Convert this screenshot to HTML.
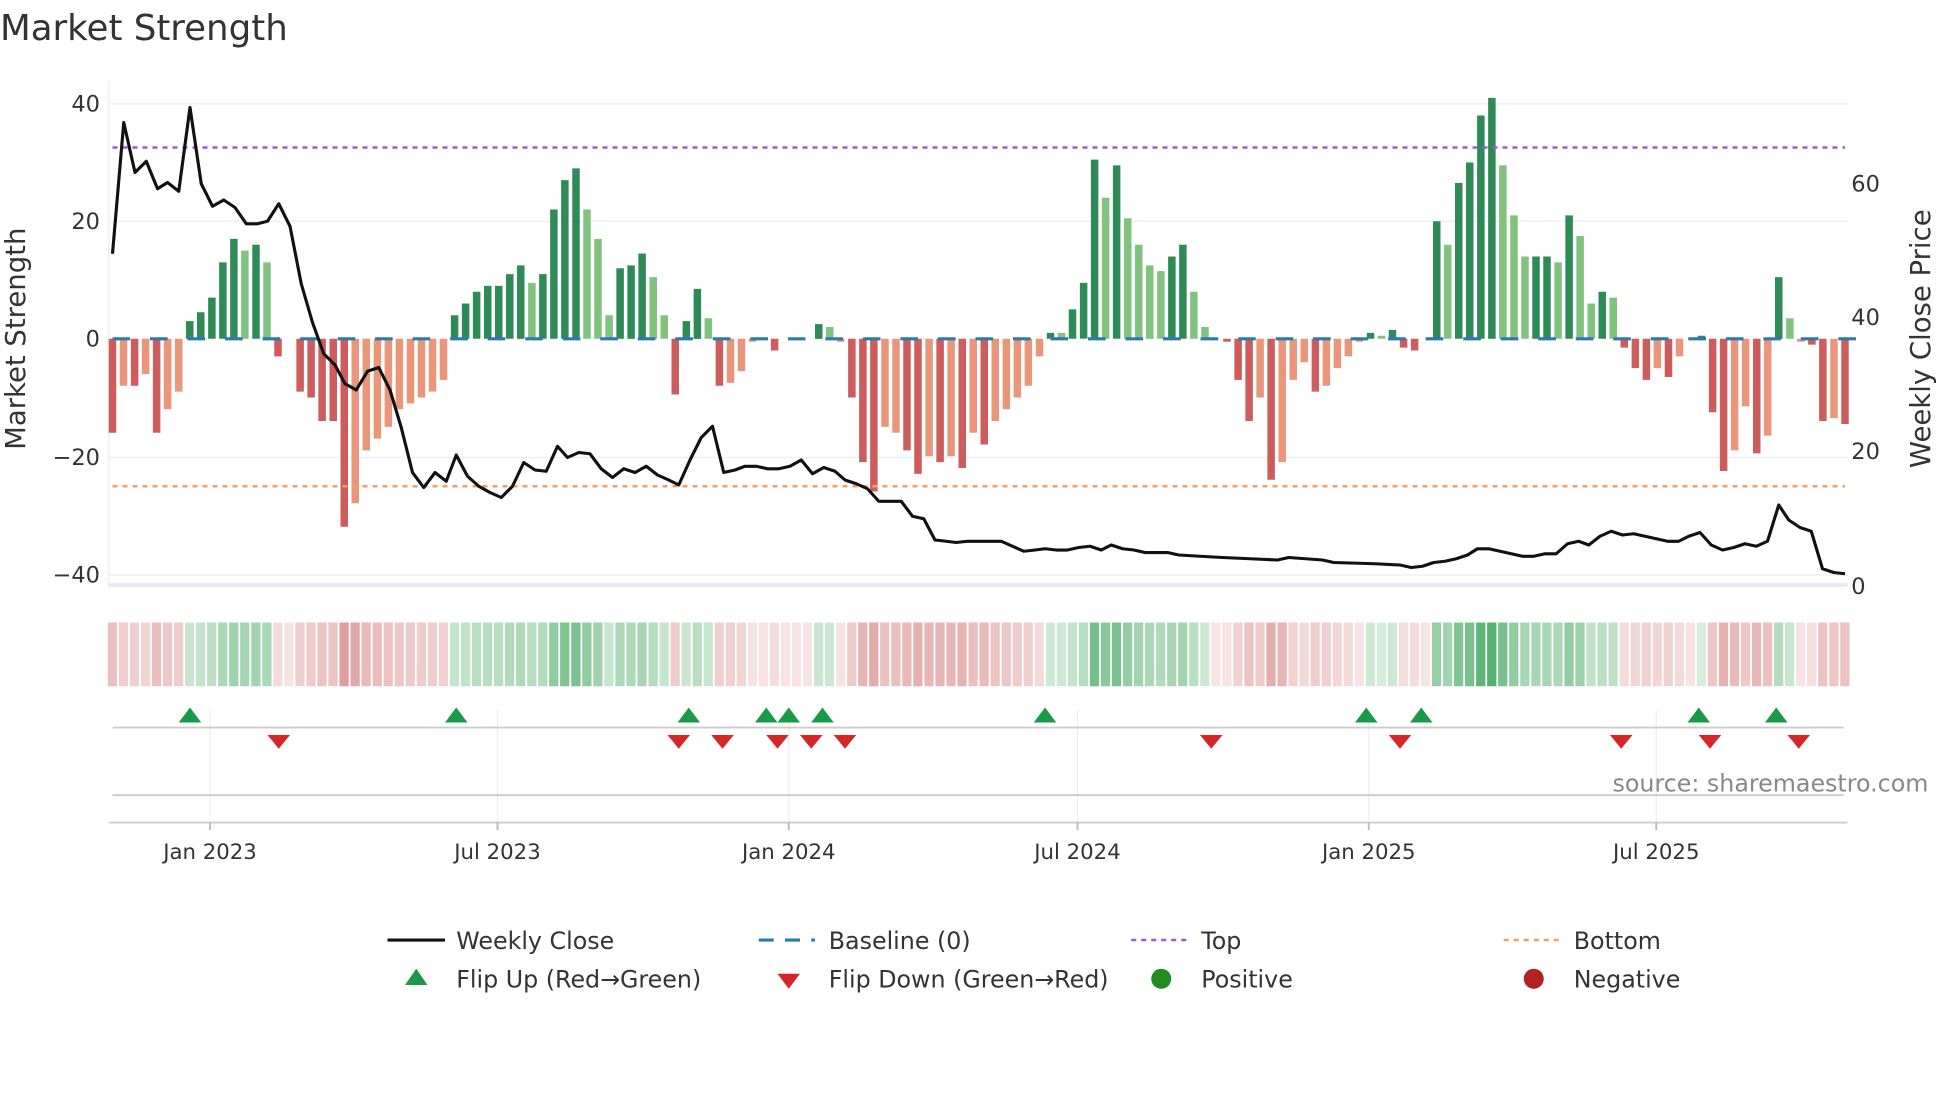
<!DOCTYPE html>
<html><head><meta charset="utf-8"><style>
html,body{margin:0;padding:0;background:#fff;width:1960px;height:1102px;overflow:hidden}
svg{display:block;font-family:"DejaVu Sans","Liberation Sans",sans-serif}
</style></head><body>
<svg id="s" width="1960" height="1102" viewBox="0 0 1568 881.6" xmlns="http://www.w3.org/2000/svg">
<rect width="1568" height="882" fill="#fff"/>
<text x="0" y="32" font-size="28.5" fill="#333">Market Strength</text>
<g stroke="#eceef3" stroke-width="1">
<line x1="87" x2="1478" y1="83" y2="83"/><line x1="87" x2="1478" y1="177" y2="177"/>
<line x1="87" x2="1478" y1="366" y2="366"/><line x1="87" x2="1478" y1="460" y2="460"/>
<line x1="87" x2="87" y1="65" y2="470"/>
</g>
<line x1="87" x2="1478" y1="468" y2="468" stroke="#e6e9f2" stroke-width="3"/>
<g id="bars"></g>
<line x1="90" x2="1476" y1="118" y2="118" stroke="#9b59d9" stroke-width="2" stroke-dasharray="4,4"/>
<line x1="90" x2="1476" y1="389" y2="389" stroke="#f0a060" stroke-width="2" stroke-dasharray="4,4"/>
<polyline id="price" fill="none" stroke="#111" stroke-width="2.5" stroke-linejoin="round"/>
<g font-size="18" fill="#333">
<text x="80" y="89" text-anchor="end">40</text><text x="80" y="183" text-anchor="end">20</text>
<text x="80" y="277" text-anchor="end">0</text><text x="80" y="372" text-anchor="end">−20</text>
<text x="80" y="466" text-anchor="end">−40</text>
<text x="1481" y="153">60</text><text x="1481" y="260">40</text><text x="1481" y="367">20</text><text x="1481" y="475">0</text>
</g>
<text transform="translate(20,271) rotate(-90)" text-anchor="middle" font-size="22" fill="#333">Market Strength</text>
<text transform="translate(1544,271) rotate(-90)" text-anchor="middle" font-size="22" fill="#333">Weekly Close Price</text>
<g id="heat"></g>
<g stroke="#eceef3" stroke-width="1">
<line x1="168" x2="168" y1="568" y2="658"/><line x1="398" x2="398" y1="568" y2="658"/>
<line x1="631" x2="631" y1="568" y2="658"/><line x1="862" x2="862" y1="568" y2="658"/>
<line x1="1095" x2="1095" y1="568" y2="658"/><line x1="1325" x2="1325" y1="568" y2="658"/>
</g>
<line x1="90" x2="1475" y1="582" y2="582" stroke="#ccc" stroke-width="1.5"/>
<line x1="90" x2="1475" y1="636" y2="636" stroke="#ccc" stroke-width="1.5"/>
<line x1="87" x2="1478" y1="658" y2="658" stroke="#ccc" stroke-width="1.5"/>
<g stroke="#bbb" stroke-width="1.5">
<line x1="168" x2="168" y1="658" y2="664"/><line x1="398" x2="398" y1="658" y2="664"/>
<line x1="631" x2="631" y1="658" y2="664"/><line x1="862" x2="862" y1="658" y2="664"/>
<line x1="1095" x2="1095" y1="658" y2="664"/><line x1="1325" x2="1325" y1="658" y2="664"/>
</g>
<g id="flips"></g>
<text x="1290" y="633" font-size="19" fill="#888">source: sharemaestro.com</text>
<g font-size="17" fill="#333" text-anchor="middle">
<text x="168" y="687">Jan 2023</text><text x="398" y="687">Jul 2023</text><text x="631" y="687">Jan 2024</text>
<text x="862" y="687">Jul 2024</text><text x="1095" y="687">Jan 2025</text><text x="1325" y="687">Jul 2025</text>
</g>
<g font-size="19" fill="#333">
<line x1="310" x2="356" y1="752" y2="752" stroke="#111" stroke-width="2.5"/>
<text x="365" y="759">Weekly Close</text>
<line x1="607" x2="652" y1="752" y2="752" stroke="#2a7ab0" stroke-width="2.5" stroke-dasharray="12,9"/>
<text x="663" y="759">Baseline (0)</text>
<line x1="905" x2="950" y1="752" y2="752" stroke="#9b59d9" stroke-width="2" stroke-dasharray="4,4"/>
<text x="961" y="759">Top</text>
<line x1="1203" x2="1248" y1="752" y2="752" stroke="#f0a060" stroke-width="2" stroke-dasharray="4,4"/>
<text x="1259" y="759">Bottom</text>
<polygon points="324,788 342,788 333,775" fill="#1a9a48"/>
<text x="365" y="790">Flip Up (Red→Green)</text>
<polygon points="622,779 640,779 631,791" fill="#d62728"/>
<text x="663" y="790">Flip Down (Green→Red)</text>
<circle cx="929" cy="783" r="8" fill="#228b22"/>
<text x="961" y="790">Positive</text>
<circle cx="1227" cy="783" r="8" fill="#b22222"/>
<text x="1259" y="790">Negative</text>
</g>
</svg>
<script>
var V=[[-16,1],[-8,0],[-8,1],[-6,0],[-16,1],[-12,0],[-9,0],[3,1],[4.5,1],[7,1],[13,1],[17,1],[15,0],[16,1],[13,0],[-3,1],[0,0],[-9,1],[-10,1],[-14,1],[-14,1],[-32,1],[-28,0],[-19,0],[-17,0],[-15,0],[-12,0],[-11,0],[-10,0],[-9,0],[-7,0],[4,1],[6,1],[8,1],[9,1],[9,1],[11,1],[12.5,1],[9.5,0],[11,1],[22,1],[27,1],[29,1],[22,0],[17,0],[4,0],[12,1],[12.5,1],[14.5,1],[10.5,0],[4,0],[-9.5,1],[3,1],[8.5,1],[3.5,0],[-8,1],[-7.5,0],[-5.5,0],[-0.5,0],[0,0],[-2,1],[0,0],[0,0],[0,0],[2.5,1],[2,0],[-0.5,0],[-10,1],[-21,1],[-26,1],[-15,0],[-16,0],[-19,1],[-23,1],[-20,0],[-21,1],[-20,0],[-22,1],[-16,0],[-18,1],[-14,0],[-12,0],[-10,0],[-8,0],[-3,0],[1,1],[1,0],[5,1],[9.5,1],[30.5,1],[24,0],[29.5,1],[20.5,0],[16,0],[12.5,0],[11.5,0],[14,1],[16,1],[8,0],[2,0],[0,0],[-0.5,1],[-7,1],[-14,1],[-10,0],[-24,1],[-21,0],[-7,0],[-4,0],[-9,1],[-8,0],[-5,0],[-3,0],[-0.5,0],[1,1],[0.5,0],[1.5,1],[-1.5,1],[-2,1],[0,0],[20,1],[16,0],[26.5,1],[30,1],[38,1],[41,1],[29.5,0],[21,0],[14,0],[14,1],[14,1],[13,0],[21,1],[17.5,0],[6,0],[8,1],[7,0],[-1.5,1],[-5,1],[-7,1],[-5,0],[-6.5,1],[-3,0],[0,0],[0.5,1],[-12.5,1],[-22.5,1],[-19,0],[-11.5,0],[-19.5,1],[-16.5,0],[10.5,1],[3.5,0],[-0.5,0],[-1,1],[-14,1],[-13.5,0],[-14.5,1]];
var n=V.length,x0=90,x1=1476,st=(x1-x0)/(n-1),bw=st*0.68,y0=271,k=4.7,h='',ht='';
for(var i=0;i<n;i++){var v=V[i][0],d=V[i][1],x=x0+i*st;
var c=v>=0?(d?'#2e8b57':'#82c27f'):(d?'#cd5c5c':'#e9967a');
if(v!=0){var y=v>0?y0-v*k:y0,hh=Math.abs(v)*k;h+='<rect x="'+(x-bw/2).toFixed(1)+'" y="'+y.toFixed(1)+'" width="'+bw.toFixed(1)+'" height="'+hh.toFixed(1)+'" fill="'+c+'"/>';}
var a=0.22+0.6*Math.min(Math.abs(v),41)/41;if(Math.abs(v)<1)a=0.2;
var hc=v>0?'rgba(50,160,80,'+a.toFixed(2)+')':'rgba(200,90,90,'+(a*0.85).toFixed(2)+')';
ht+='<rect x="'+(x-st/2+0.6).toFixed(1)+'" y="498" width="'+(st-1.4).toFixed(1)+'" height="51" fill="'+hc+'"/>';}
for(var bx=x0;bx<x1;bx+=st*3.4){h+='<line x1="'+bx.toFixed(1)+'" x2="'+(bx+st*1.6).toFixed(1)+'" y1="271" y2="271" stroke="#2a7ab0" stroke-width="2.5"/>';}
document.getElementById('bars').innerHTML=h;document.getElementById('heat').innerHTML=ht;
var P="90,203 99,98 108,138 117,129 126,151 134,146 143,153 152,86 161,147 170,165 179,160 188,166 197,179 206,179 214,177 223,163 232,181 241,227 250,258 259,283 268,292 276,307 285,312 294,297 303,294 312,312 321,342 330,378 339,390 348,378 357,385 365,364 374,381 383,389 392,394 401,398 410,389 419,370 428,376 437,377 446,357 454,366 463,362 472,363 481,375 490,382 499,375 508,378 517,373 526,380 535,384 543,388 552,368 561,350 570,341 579,378 588,376 596,373 605,373 614,375 623,375 632,373 641,368 650,379 659,374 668,377 676,384 685,387 694,391 703,401 712,401 721,401 730,413 739,415 748,432 757,433 765,434 774,433 783,433 792,433 801,433 810,437 819,441 828,440 836,439 845,440 854,440 863,438 872,437 881,440 889,436 898,439 907,440 916,442 925,442 934,442 943,444 960,445 978,446 1000,447 1022,448 1031,446 1058,448 1067,450 1100,451 1120,452 1129,454 1138,453 1147,450 1156,449 1165,447 1174,444 1182,439 1191,439 1200,441 1218,445 1227,445 1236,443 1245,443 1254,435 1263,433 1271,436 1280,429 1289,425 1298,428 1307,427 1316,429 1325,431 1334,433 1343,433 1351,429 1360,426 1369,436 1378,440 1387,438 1396,435 1405,437 1414,433 1423,404 1431,416 1440,422 1449,425 1458,455 1467,458 1476,459";
document.getElementById('price').setAttribute('points',P);
var up=[152,365,551,613,631,658,836,1093,1137,1359,1421],dn=[223,543,578,622,649,676,969,1120,1297,1368,1439],f='';
up.forEach(function(x){f+='<polygon points="'+(x-9)+',578 '+(x+9)+',578 '+x+',566" fill="#1a9a48"/>';});
dn.forEach(function(x){f+='<polygon points="'+(x-9)+',588 '+(x+9)+',588 '+x+',599" fill="#d62728"/>';});
document.getElementById('flips').innerHTML=f;
</script>
</body></html>
